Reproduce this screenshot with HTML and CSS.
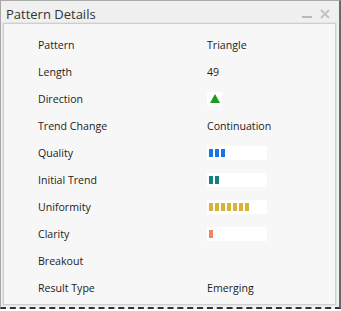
FILE: index.html
```html
<!DOCTYPE html>
<html>
<head>
	<title>Pattern Details</title>
	<meta charset="utf-8" />
	<link rel="stylesheet" href="styles.css">
</head>
<body>
	<div class="window">
		<div class="titlebar">
			<span class="title">Pattern Details</span>
			<span class="tools">
				<svg class="tool" width="12" height="12" viewBox="0 0 12 12"><rect x="1" y="8" width="10" height="2" fill="#b8b8b8"/></svg>
				<svg class="tool" width="12" height="12" viewBox="0 0 12 12"><path d="M2 2 L10 10 M10 2 L2 10" stroke="#c4c4c4" stroke-width="2.2"/></svg>
			</span>
		</div>
		<div class="panel">
			<div class="row"><span class="label">Pattern</span><span class="value">Triangle</span></div>
			<div class="row"><span class="label">Length</span><span class="value">49</span></div>
			<div class="row"><span class="label">Direction</span><span class="value"><span class="arrow"><svg width="10" height="9" viewBox="0 0 10 9"><polygon points="5,0 10,9 0,9" fill="#1f9a1f"/></svg></span></span></div>
			<div class="row"><span class="label">Trend Change</span><span class="value">Continuation</span></div>
			<div class="row"><span class="label">Quality</span><span class="value"><span class="meter"><i class="seg blue"></i><i class="seg blue"></i><i class="seg blue"></i></span></span></div>
			<div class="row"><span class="label">Initial Trend</span><span class="value"><span class="meter"><i class="seg teal"></i><i class="seg teal"></i></span></span></div>
			<div class="row"><span class="label">Uniformity</span><span class="value"><span class="meter"><i class="seg gold"></i><i class="seg gold"></i><i class="seg gold"></i><i class="seg gold"></i><i class="seg gold"></i><i class="seg gold"></i><i class="seg gold"></i></span></span></div>
			<div class="row"><span class="label">Clarity</span><span class="value"><span class="meter"><i class="seg orange"></i></span></span></div>
			<div class="row"><span class="label">Breakout</span><span class="value"></span></div>
			<div class="row"><span class="label">Result Type</span><span class="value">Emerging</span></div>
		</div>
	</div>
</body>
</html>
```

FILE: styles.css
```css
body { margin: 0; background: #fff; }
.window {
	width: 338px; height: 306px;
	border: 1px solid #a8a8a8;
	border-right: 2px solid #6a6a6a;
	border-bottom: 2px dashed #333;
	background: #f0f0f0;
	font-family: "Open Sans", sans-serif;
	display: flex; flex-direction: column;
}
.titlebar {
	height: 22px;
	display: flex; align-items: center; justify-content: space-between;
	padding: 0 8px 0 5px;
}
.title { font-size: 13px; color: #333; margin-top: 3px; }
.tools { display: flex; gap: 6px; margin-top: 4px; }
.panel {
	flex: 1;
	margin: 0 3px 2px 2px;
	border: 1px solid #cfcfcf;
	box-shadow: 0 0 0 1px #e4e4e4;
	background: #f7f7f7;
	padding: 7px 0 0 34px;
}
.row { display: flex; align-items: center; height: 27px; font-size: 10.6px; color: #222; }
.label { width: 169px; }
.arrow {
	display: flex; align-items: center; justify-content: center;
	width: 15px; height: 14px; background: #fff;
}
.meter {
	display: flex; gap: 2px;
	width: 56px; height: 8px; padding: 3px 2px 3px 2px;
	background: #fff;
}
.seg { display: block; width: 4px; height: 8px; }
.blue { background: #1a73e8; }
.teal { background: #138080; }
.gold { background: #d9b336; }
.orange { background: #f58458; }
```
